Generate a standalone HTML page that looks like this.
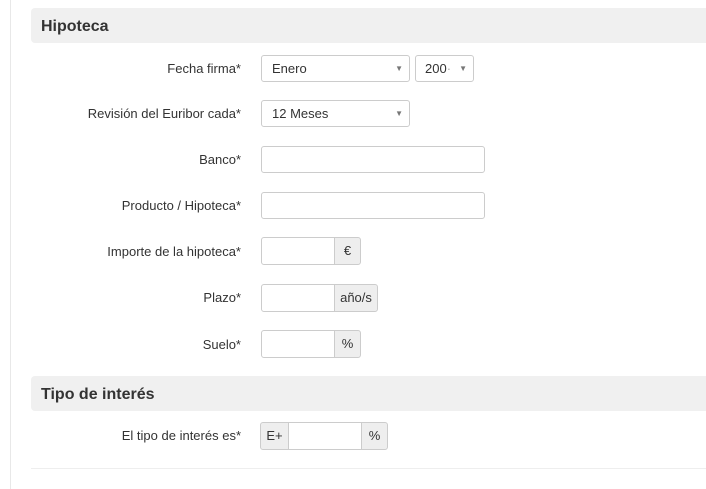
<!DOCTYPE html>
<html><head><meta charset="utf-8"><style>
body{margin:0;width:706px;height:489px;background:#fff;font-family:"Liberation Sans",Arial,sans-serif;font-size:13px;color:#333;position:relative;overflow:hidden}
.vl{position:absolute;left:10px;top:0;width:1px;height:489px;background:#e8e8e8}
.hd{position:absolute;left:31px;width:680px;height:35px;background:#f0f0f0;border-radius:4px;font-weight:bold;font-size:16px;line-height:37px;padding-left:10px;box-sizing:border-box;color:#333}
.lb{position:absolute;right:465px;text-align:right;white-space:nowrap}
.b{position:absolute;box-sizing:border-box;border:1px solid #ccc;background:#fff;border-radius:3px}
.sel{padding-left:10px;line-height:26px}
.sel::after{content:"▼";position:absolute;right:6px;top:0;font-size:8px;color:#777}
.ad{position:absolute;box-sizing:border-box;border:1px solid #ccc;background:#eee;text-align:center;line-height:25px}
</style></head><body>
<div class="vl"></div>
<div class="hd" style="top:8px">Hipoteca</div>
<div class="lb" style="top:61px">Fecha firma*</div>
<div class="b sel" style="left:261px;top:55px;width:149px;height:27px">Enero</div>
<div class="b sel" style="left:415px;top:55px;width:59px;height:27px;padding-left:9px">200<span style="color:#aaa">·</span></div>
<div class="lb" style="top:106px">Revisión del Euribor cada*</div>
<div class="b sel" style="left:261px;top:100px;width:149px;height:27px">12 Meses</div>
<div class="lb" style="top:152px">Banco*</div>
<div class="b" style="left:261px;top:146px;width:224px;height:27px"></div>
<div class="lb" style="top:198px">Producto / Hipoteca*</div>
<div class="b" style="left:261px;top:192px;width:224px;height:27px"></div>
<div class="lb" style="top:244px">Importe de la hipoteca*</div>
<div class="b" style="left:261px;top:237px;width:74px;height:28px;border-radius:3px 0 0 3px"></div>
<div class="ad" style="left:334px;top:237px;width:27px;height:28px;border-radius:0 3px 3px 0">€</div>
<div class="lb" style="top:290px">Plazo*</div>
<div class="b" style="left:261px;top:284px;width:74px;height:28px;border-radius:3px 0 0 3px"></div>
<div class="ad" style="left:334px;top:284px;width:44px;height:28px;border-radius:0 3px 3px 0">año/s</div>
<div class="lb" style="top:337px">Suelo*</div>
<div class="b" style="left:261px;top:330px;width:74px;height:28px;border-radius:3px 0 0 3px"></div>
<div class="ad" style="left:334px;top:330px;width:27px;height:28px;border-radius:0 3px 3px 0">%</div>
<div class="hd" style="top:376px">Tipo de interés</div>
<div class="lb" style="top:428px">El tipo de interés es*</div>
<div class="ad" style="left:260px;top:422px;width:29px;height:28px;border-radius:3px 0 0 3px">E+</div>
<div class="b" style="left:288px;top:422px;width:74px;height:28px;border-radius:0"></div>
<div class="ad" style="left:361px;top:422px;width:27px;height:28px;border-radius:0 3px 3px 0">%</div>
<div style="position:absolute;left:31px;top:468px;width:680px;height:1px;background:#eee"></div>
</body></html>
